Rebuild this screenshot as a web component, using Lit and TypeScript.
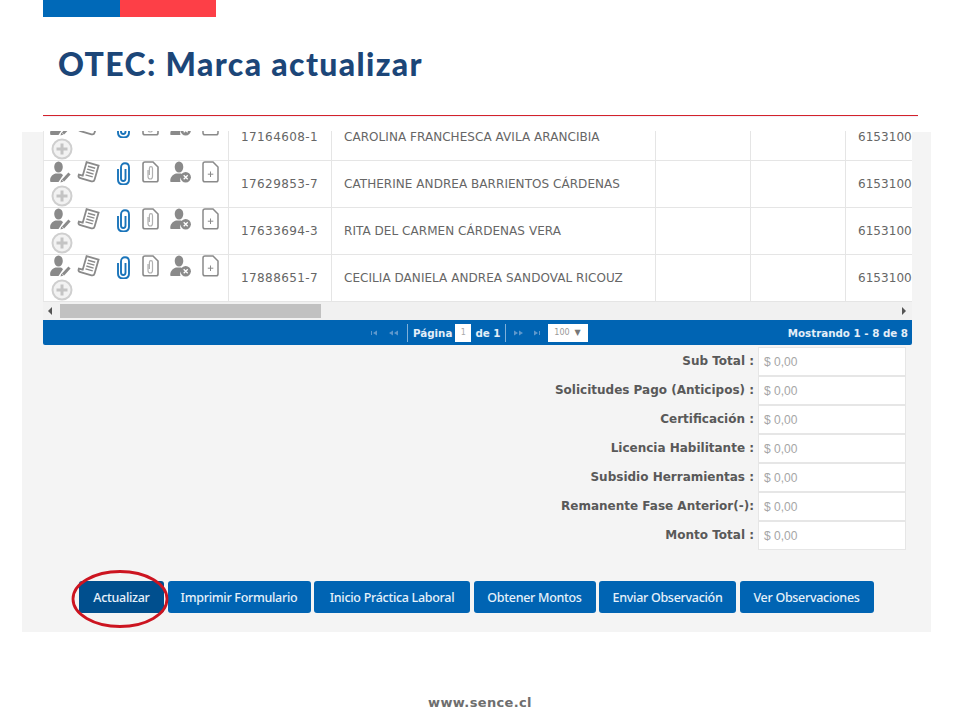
import { LitElement, html, css, svg } from "lit";
import { customElement } from "lit/decorators.js";

const rows = [
  ["17164608-1", "CAROLINA FRANCHESCA AVILA ARANCIBIA"],
  ["17629853-7", "CATHERINE ANDREA BARRIENTOS CÁRDENAS"],
  ["17633694-3", "RITA DEL CARMEN CÁRDENAS VERA"],
  ["17888651-7", "CECILIA DANIELA ANDREA SANDOVAL RICOUZ"],
];
const totals = [
  "Sub Total :",
  "Solicitudes Pago (Anticipos) :",
  "Certificación :",
  "Licencia Habilitante :",
  "Subsidio Herramientas :",
  "Remanente Fase Anterior(-):",
  "Monto Total :",
];
const buttons = [
  "Actualizar",
  "Imprimir Formulario",
  "Inicio Práctica Laboral",
  "Obtener Montos",
  "Enviar Observación",
  "Ver Observaciones",
];

const G = "#8a8a8a";
const glyphs = [
  svg`<ellipse cx="13.5" cy="6" rx="4.3" ry="5.6" fill="${G}"/>
      <path d="M5.5 21c-1.500-4 1.500-7.500 5-8.500h5.500c.8.4 1.500 1 2 1.800l-4.500 6.700z" fill="${G}"/>
      <path d="M18 19.500l6.500-7" stroke="${G}" stroke-width="3" fill="none"/>
      <path d="M15.500 21.500l.8-3 2.200 2z" fill="${G}"/>`,
  svg`<g transform="rotate(16 15 11)" fill="none" stroke="${G}" stroke-width="1.800">
        <path d="M9 2.500h12.500v14.500c0 1.500-1 2.500-2.500 2.500H7.500c-1.500 0-2.500-1-2.500-2v-1h4z"/>
        <path d="M11.500 6h7.500M11.500 9h7.500M11.500 12h7.500M11.500 15h7.500" stroke-width="1.400"/>
      </g>`,
  svg`<path d="M13 8v10.500c0 3.300 2.300 5 5.500 5s5.500-1.700 5.500-5V6.500c0-2.500-1.700-4.200-4-4.200s-4 1.700-4 4.200V17.500c0 1.500.8 2.500 2.300 2.500s2.200-1 2.200-2.500V8" fill="none" stroke="#1a74ba" stroke-width="1.900"/>`,
  svg`<path d="M10 1h8l5 5v13c0 1-.8 1.800-1.800 1.800H10c-1 0-2-.8-2-1.800V3c0-1 1-2 2-2z" fill="none" stroke="${G}" stroke-width="1.600"/>
      <path d="M13 9v6.500c0 1.600 1 2.500 2.300 2.500s2.200-.9 2.200-2.500V7.500c0-1-.7-1.800-1.600-1.800s-1.500.8-1.500 1.800v6.500" fill="none" stroke="#b0b0b0" stroke-width="1.200"/>`,
  svg`<ellipse cx="14" cy="6" rx="4.300" ry="5.600" fill="${G}"/>
      <path d="M5.500 21c-1-4 2-7.500 5.500-8.500h5c1 .5 1.500 1 2 1.500-2.500 1.500-3.500 4.500-2.500 7z" fill="${G}"/>
      <circle cx="20.700" cy="16.300" r="5.200" fill="${G}"/>
      <path d="M18.700 14.300l4 4M22.700 14.300l-4 4" stroke="#fff" stroke-width="1.300"/>`,
  svg`<path d="M10 1h8l5 5v13c0 1-.8 1.800-1.800 1.800H10c-1 0-2-.8-2-1.800V3c0-1 1-2 2-2z" fill="none" stroke="${G}" stroke-width="1.500"/>
      <path d="M15.500 10.500v5.500M12.800 13.200h5.500" stroke="${G}" stroke-width="1"/>`,
];

@customElement("app-root")
export class AppRoot extends LitElement {
  static styles = css`
    :host {
      display: block;
      width: 960px;
      height: 720px;
      overflow: hidden;
      background: #fff;
      position: relative;
      font-family: "DejaVu Sans", sans-serif;
    }
    .flag {
      display: flex;
      margin-left: 43px;
      height: 17px;
    }
    .flag i { display: block; height: 17px; }
    .flag .b { width: 77px; background: #0069b8; }
    .flag .r { width: 96px; background: #fd3f47; }
    h1 {
      margin: 30px 0 0 58px;
      font: 900 32px/34px "Lato", sans-serif;
      color: #1c4678;
      letter-spacing: 1.350px;
    }
    .rule {
      margin: 34px 0 0 43px;
      width: 875px;
      height: 1px;
      background: #d3222a;
      box-shadow: 0 1px 1px #f0ecf8;
    }
    .panel {
      display: flow-root;
      margin: 16px 0 0 22px;
      width: 909px;
      height: 500px;
      box-sizing: border-box;
      padding-left: 21px;
      background: #f4f4f4;
      position: relative;
    }
    .grid-wrap {
      width: 869px;
      height: 171px;
      margin-top: -1px;
      overflow: hidden;
    }
    table {
      border-collapse: separate;
      border-spacing: 0;
      table-layout: fixed;
      width: 969px;
      margin-top: -17px;
      background: #fff;
      font-size: 12px;
      color: #666;
    }
    td {
      box-sizing: border-box;
      height: 47px;
      padding: 0 12px;
      border-right: 1px solid #e5e5e5;
      border-bottom: 1px solid #e5e5e5;
      white-space: nowrap;
      overflow: hidden;
      letter-spacing: .05px;
    }
    td.id { letter-spacing: .4px; }
    td.tools {
      padding: 0;
      vertical-align: top;
      border-left: 1px solid #e8e8e8;
    }
    .slots { display: flex; margin-left: 1px; height: 24px; }
    .slots svg { display: block; flex: none; width: 30px; height: 24px; }
    .more { display: block; width: 24px; height: 24px; margin: -1px 0 -1px 6px; }
    .scroll {
      width: 869px;
      height: 18px;
      display: flex;
      align-items: center;
      gap: 4px;
      padding: 0 5px;
      box-sizing: border-box;
      background: #f1f1f1;
    }
    .scroll .thumb {
      width: 261px;
      height: 14px;
      margin-left: 4px;
      background: #c1c1c1;
    }
    .scroll .right { margin-left: auto; margin-right: 1px; }
    .pager {
      width: 869px;
      height: 25px;
      box-sizing: border-box;
      display: flex;
      align-items: center;
      padding: 0 4px 0 327px;
      background: #0064b3;
      border-radius: 0 0 2px 2px;
      color: #e3eef8;
      font-size: 10.300px;
      font-weight: 700;
    }
    .pager .nav { display: block; width: 10px; height: 10px; flex: none; }
    .pager .nav + .nav { margin-left: 9px; }
    .pager .sep { width: 1px; height: 18px; background: #7fb0d9; margin: 0 5px 0 8px; }
    .pager .sep.after { margin: 0 7px 0 4px; }
    .pager .page {
      width: 16px;
      height: 18px;
      margin: 0 4px 0 3px;
      background: #fff;
      color: #aaa;
      font-size: 8px;
      font-weight: 400;
      display: flex;
      align-items: center;
      justify-content: center;
    }
    .pager .select {
      width: 40px;
      height: 18px;
      margin-left: 6px;
      background: #fff;
      color: #999;
      font-size: 8px;
      font-weight: 400;
      display: flex;
      align-items: center;
      justify-content: center;
      gap: 5px;
    }
    .pager .select b { font-size: 8px; color: #777; font-weight: 400; }
    .pager .count { margin-left: auto; }
    .totals { margin-top: 2px; width: 863px; }
    .total {
      display: flex;
      justify-content: flex-end;
      align-items: center;
      gap: 4px;
      height: 29px;
    }
    .total label {
      font-size: 12px;
      font-weight: 700;
      color: #595959;
      position: relative;
      top: -1px;
    }
    .total .value {
      box-sizing: border-box;
      width: 148px;
      height: 29px;
      padding: 1px 5px 0;
      background: #fff;
      border: 1px solid #e6e6e6;
      color: #a6a6a6;
      font: 12px/27px "Liberation Sans", sans-serif;
    }
    .actions {
      display: flex;
      gap: 3.500px;
      margin: 31px 0 0 36px;
    }
    .actions button {
      height: 32px;
      padding: 0;
      border: 0;
      border-radius: 3px;
      background: #0064b3;
      color: #e6f1fa;
      font: 500 12.500px "Noto Sans", sans-serif;
      letter-spacing: -.3px;
    }
    .actions button.on { background: #004f8e; }
    .ring {
      position: absolute;
      left: 49px;
      top: 438px;
      width: 98px;
      height: 60px;
      overflow: visible;
    }
    footer {
      margin-top: 63px;
      text-align: center;
      font-size: 13px;
      line-height: 16px;
      font-weight: 700;
      color: #6e6e6e;
      letter-spacing: .35px;
    }
  `;

  private nav(d: string) {
    return html`<svg class="nav" viewBox="0 0 10 10"><path d=${d} fill="#5f98cc"></path></svg>`;
  }

  render() {
    const widths = [85, 143, 156, 122, 137, 134];
    return html`
      <div class="flag"><i class="b"></i><i class="r"></i></div>
      <h1>OTEC: Marca actualizar</h1>
      <div class="rule"></div>
      <section class="panel">
        <div class="grid-wrap">
          <table>
            <colgroup>
              <col style="width:186px" /><col style="width:103px" /><col style="width:324px" />
              <col style="width:95px" /><col style="width:95px" /><col style="width:166px" />
            </colgroup>
            <tbody>
              ${rows.map(
                ([id, name]) => html`<tr>
                  <td class="tools">
                    <div class="slots">
                      ${glyphs.map((g) => html`<svg viewBox="0 0 30 24">${g}</svg>`)}
                    </div>
                    <svg class="more" viewBox="0 0 24 24">
                      <circle cx="12" cy="12" r="9.500" fill="#f2f2f2" stroke="#cfcfcf" stroke-width="2"></circle>
                      <path d="M12 6.500v11M6.500 12h11" stroke="#c4c4c4" stroke-width="3"></path>
                    </svg>
                  </td>
                  <td class="id">${id}</td>
                  <td>${name}</td>
                  <td></td>
                  <td></td>
                  <td>61531000</td>
                </tr>`
              )}
            </tbody>
          </table>
        </div>
        <div class="scroll">
          <svg width="4" height="8" viewBox="0 0 4 8"><path d="M4 0v8L0 4z" fill="#555"></path></svg>
          <div class="thumb"></div>
          <svg class="right" width="4" height="8" viewBox="0 0 4 8"><path d="M0 0v8l4-4z" fill="#555"></path></svg>
        </div>
        <div class="pager">
          ${this.nav("M1 3h1v4H1zM3 5l4-2.500v5z")}
          ${this.nav("M0 5l4-2.500v5zM5 5l4-2.500v5z")}
          <span class="sep"></span>
          <span>Página</span>
          <span class="page">1</span>
          <span>de 1</span>
          <span class="sep after"></span>
          ${this.nav("M1 2.500l4 2.500-4 2.500zM6 2.500l4 2.500-4 2.500z")}
          ${this.nav("M2 2.500l4 2.500-4 2.500zM7 3h1v4H7z")}
          <span class="select">100 <b>▼</b></span>
          <span class="count">Mostrando 1 - 8 de 8</span>
        </div>
        <div class="totals">
          ${totals.map(
            (t) => html`<div class="total"><label>${t}</label><div class="value">$ 0,00</div></div>`
          )}
        </div>
        <div class="actions">
          ${buttons.map(
            (b, i) =>
              html`<button class=${i === 0 ? "on" : ""} style="width:${widths[i]}px">${b}</button>`
          )}
        </div>
        <svg class="ring" viewBox="0 0 98 60">
          <ellipse cx="49" cy="29" rx="47" ry="27.500" fill="none" stroke="#cc1420" stroke-width="2.800"></ellipse>
        </svg>
      </section>
      <footer>www.sence.cl</footer>
    `;
  }
}
